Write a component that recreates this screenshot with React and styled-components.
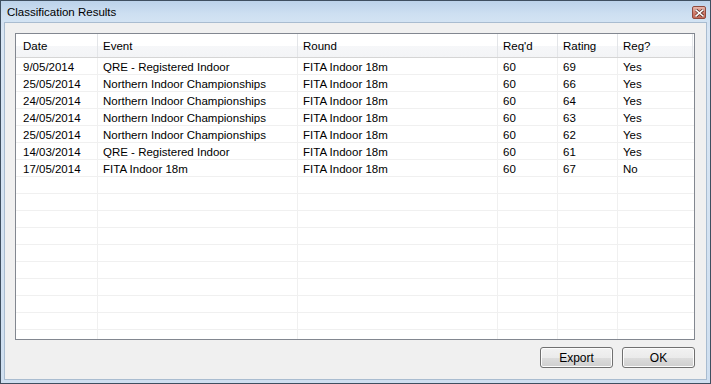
import React from 'react';
import styled, { createGlobalStyle } from 'styled-components';

const results = [
  { date: '9/05/2014', event: 'QRE - Registered Indoor', round: 'FITA Indoor 18m', reqd: '60', rating: '69', reg: 'Yes' },
  { date: '25/05/2014', event: 'Northern Indoor Championships', round: 'FITA Indoor 18m', reqd: '60', rating: '66', reg: 'Yes' },
  { date: '24/05/2014', event: 'Northern Indoor Championships', round: 'FITA Indoor 18m', reqd: '60', rating: '64', reg: 'Yes' },
  { date: '24/05/2014', event: 'Northern Indoor Championships', round: 'FITA Indoor 18m', reqd: '60', rating: '63', reg: 'Yes' },
  { date: '25/05/2014', event: 'Northern Indoor Championships', round: 'FITA Indoor 18m', reqd: '60', rating: '62', reg: 'Yes' },
  { date: '14/03/2014', event: 'QRE - Registered Indoor', round: 'FITA Indoor 18m', reqd: '60', rating: '61', reg: 'Yes' },
  { date: '17/05/2014', event: 'FITA Indoor 18m', round: 'FITA Indoor 18m', reqd: '60', rating: '67', reg: 'No' }
];

const columns = [
  { key: 'date', label: 'Date', width: 82, pad: 7 },
  { key: 'event', label: 'Event', width: 200, pad: 5 },
  { key: 'round', label: 'Round', width: 200, pad: 5 },
  { key: 'reqd', label: "Req'd", width: 60, pad: 5 },
  { key: 'rating', label: 'Rating', width: 60, pad: 5 },
  { key: 'reg', label: 'Reg?', width: 75, pad: 5 }
];

const TOTAL_ROWS = 17;

const GlobalStyle = createGlobalStyle`
  html, body {
    margin: 0;
    padding: 0;
    background: #ffffff;
  }
  body {
    font-family: "Liberation Sans", Arial, sans-serif;
    font-size: 11.5px;
    color: #000;
  }
`;

export default function App() {
  const rows = [];
  for (let i = 0; i < TOTAL_ROWS; i++) rows.push(results[i] || null);

  return (
    <>
      <GlobalStyle />
      <Window>
        <TitleBar>
          <Title>Classification Results</Title>
          <CloseButton aria-label="Close">
            <svg width="9" height="8" viewBox="0 0 9 8">
              <path d="M1 1 L8 7 M8 1 L1 7" stroke="#5a2a22" strokeWidth="3" strokeLinecap="square" />
              <path d="M1 1 L8 7 M8 1 L1 7" stroke="#ffffff" strokeWidth="1.6" strokeLinecap="square" />
            </svg>
          </CloseButton>
        </TitleBar>
        <Client>
          <ListView>
            <HeaderRow>
              {columns.map(col => (
                <HeaderCell key={col.key} width={col.width} pad={col.pad}>
                  {col.label}
                </HeaderCell>
              ))}
            </HeaderRow>
            <Body>
              {rows.map((row, i) => (
                <Row key={i}>
                  {columns.map((col, c) => (
                    <Cell key={col.key} width={col.width} pad={col.pad} last={c === columns.length - 1}>
                      {row ? row[col.key] : ''}
                    </Cell>
                  ))}
                </Row>
              ))}
            </Body>
          </ListView>
          <ButtonBar>
            <Button>Export</Button>
            <Button>OK</Button>
          </ButtonBar>
        </Client>
      </Window>
    </>
  );
}

const Window = styled.div`
  width: 711px;
  height: 384px;
  box-sizing: border-box;
  border: 1px solid #3f4f60;
  background: linear-gradient(#c4d7ec, #d9e6f4 30px, #cfdff0);
  display: flex;
  flex-direction: column;
`;

const TitleBar = styled.div`
  height: 21px;
  display: flex;
  align-items: center;
  justify-content: space-between;
  padding: 0 4px 0 6px;
  background: linear-gradient(#bcd2ea, #cddff1 60%, #d3e3f3);
`;

const Title = styled.div`
  font-size: 11.5px;
  color: #000;
`;

const CloseButton = styled.div`
  width: 12px;
  height: 11px;
  margin-top: 2px;
  border: 1px solid #8e4a3e;
  border-radius: 2px;
  background: linear-gradient(#e8b8ae, #cf7a6a 55%, #c46a58);
  display: flex;
  align-items: center;
  justify-content: center;
`;

const Client = styled.div`
  flex: 1;
  margin: 0 3px 3px 3px;
  border: 1px solid #a9bcd0;
  background: #f0f0f0;
  padding: 10px 11px 0 10px;
  display: flex;
  flex-direction: column;
`;

const ListView = styled.div`
  height: 307px;
  box-sizing: border-box;
  border: 1px solid #828790;
  background: #ffffff;
  overflow: hidden;
  display: flex;
  flex-direction: column;
`;

const HeaderRow = styled.div`
  display: flex;
  height: 24px;
  box-sizing: border-box;
  border-bottom: 1px solid #d5d5d5;
  background: linear-gradient(#ffffff, #ffffff 50%, #f6f7f9 51%, #f3f4f6);
`;

const HeaderCell = styled.div`
  width: ${props => props.width}px;
  box-sizing: border-box;
  padding-left: ${props => props.pad}px;
  border-right: 1px solid #e3e5e8;
  display: flex;
  align-items: center;
  white-space: nowrap;
`;

const Body = styled.div`
  flex: 1;
  overflow: hidden;
`;

const Row = styled.div`
  display: flex;
  height: 17px;
  box-sizing: border-box;
  border-bottom: 1px solid #f0f0f0;
`;

const Cell = styled.div`
  width: ${props => props.width}px;
  box-sizing: border-box;
  padding-left: ${props => props.pad}px;
  padding-top: 2px;
  border-right: ${props => (props.last ? 'none' : '1px solid #f0f0f0')};
  line-height: 14px;
  white-space: nowrap;
`;

const ButtonBar = styled.div`
  display: flex;
  justify-content: flex-end;
  gap: 9px;
  margin-top: 7px;
`;

const Button = styled.div`
  width: 73px;
  height: 21px;
  box-sizing: border-box;
  border: 1px solid #707070;
  border-radius: 3px;
  background: linear-gradient(#f2f2f2, #ebebeb 50%, #dddddd 51%, #cfcfcf);
  box-shadow: inset 0 0 0 1px #fcfcfc;
  display: flex;
  align-items: center;
  justify-content: center;
  font-size: 12px;
`;
